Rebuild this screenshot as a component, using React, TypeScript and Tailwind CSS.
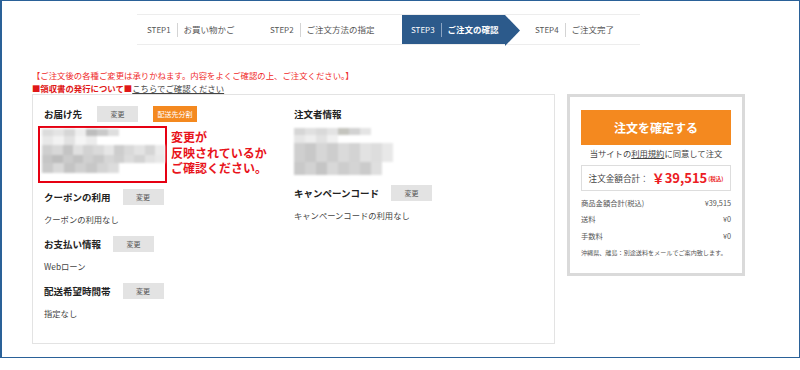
import React from "react";

type BlurRow = { h: number; cells: string[] };

const addressBlur: BlurRow[] = [
  { h: 7, cells: ["#dcdcdc", "#e4e4e4", "#d6d6d6", "#eeeeee", "#bdbdbd", "#c9c9c9", "#dedede"] },
  { h: 9, cells: ["#e8e8e8", "#f2f2f2", "#e2e2e2", "#f5f5f5", "#ececec"] },
  { h: 10, cells: ["#cfcfcf", "#d8d8d8", "#c4c4c4", "#e0e0e0", "#d2d2d2", "#dadada", "#e6e6e6", "#cdcdcd", "#d9d9d9", "#e3e3e3", "#d5d5d5", "#ebebeb"] },
  { h: 8, cells: ["#c6c6c6", "#bdbdbd", "#cbcbcb", "#c2c2c2", "#d0d0d0", "#c8c8c8", "#d6d6d6", "#cfcfcf", "#dcdcdc", "#d3d3d3", "#e2e2e2", "#e8e8e8"] },
  { h: 10, cells: ["#cacaca", "#d9d9d9", "#c4c4c4", "#d0d0d0", "#c7c7c7", "#d4d4d4", "#dcdcdc"] },
];

const ordererBlur: BlurRow[] = [
  { h: 7, cells: ["#d6d6d6", "#e0e0e0", "#d9d9d9", "#e3e3e3", "#c4c4be", "#d2d2d2", "#e4e4e4"] },
  { h: 8, cells: ["#e6e6e6", "#eeeeee", "#e2e2e2", "#f0f0f0"] },
  { h: 19, cells: ["#cfcfcf", "#c8c8c8", "#d6d6d6", "#cdcdcd", "#dadada", "#d3d3d3", "#e2e2e2", "#dddddd", "#e8e8e8"] },
  { h: 13, cells: ["#c9c9c9", "#d2d2d2", "#c5c5c5", "#d8d8d8", "#cdcdcd", "#d4d4d4", "#cbcbcb", "#dfdfdf"] },
];

function Blur({ rows }: { rows: BlurRow[] }) {
  return (
    <div className="flex flex-col blur-[1px]">
      {rows.map((r, i) => (
        <div key={i} className="flex">
          {r.cells.map((c, j) => (
            <div key={j} className="w-[11px]" style={{ backgroundColor: c, height: r.h }} />
          ))}
        </div>
      ))}
    </div>
  );
}

function ChangeBtn() {
  return (
    <div className="ml-3 flex h-[16px] w-[41px] items-center justify-center bg-[#e3e3e3] text-[7px] text-[#555]">
      変更
    </div>
  );
}

function Section({ title, value }: { title: string; value: string }) {
  return (
    <div className="mt-[11px]">
      <div className="flex h-[16px] items-center">
        <h2 className="text-[9.5px] font-bold leading-[12px] text-[#222]">{title}</h2>
        <ChangeBtn />
      </div>
      <p className="mt-[8px] text-[8.3px] leading-[12px] text-[#444]">{value}</p>
    </div>
  );
}

function Step({ num, label, active, className }: { num: string; label: string; active?: boolean; className: string }) {
  return (
    <div className={`relative flex h-full items-center ${className} ${active ? "bg-[#2c5a8b] text-white" : "text-[#555]"}`}>
      <span className="text-[8px] leading-none">{num}</span>
      <span className={`mx-[6px] h-[14px] w-px ${active ? "bg-[#8aa4c2]" : "bg-[#d4d4d4]"}`} />
      <span className={`text-[8.5px] leading-none ${active ? "font-bold" : ""}`}>{label}</span>
      {active && (
        <svg className="absolute right-[-15px] top-0" width="15" height="31" viewBox="0 0 15 31">
          <polygon points="0,0 15,15.5 0,31" fill="#2c5a8b" />
        </svg>
      )}
    </div>
  );
}

export default function App() {
  return (
    <div className="h-[370px] w-[800px] bg-white font-['Noto_Sans_CJK_JP','Liberation_Sans',sans-serif]">
      <div className="h-[358px] w-[800px] border-t border-r border-b border-l-2 border-[#2a6198]">
        {/* steps */}
        <div className="ml-[135px] mt-[13px] flex h-[31px] w-[503px] border-y border-[#ededed]">
          <Step num="STEP1" label="お買い物かご" className="w-[123px] pl-[10px]" />
          <Step num="STEP2" label="ご注文方法の指定" className="w-[142px] pl-[10px]" />
          <Step num="STEP3" label="ご注文の確認" active className="w-[103px] pl-[9px]" />
          <Step num="STEP4" label="ご注文完了" className="pl-[30px]" />
        </div>

        {/* notice */}
        <div className="ml-[30px] mt-[24px] text-[8.4px] leading-[13px]">
          <p className="text-[#f02a2a]">【ご注文後の各種ご変更は承りかねます。内容をよくご確認の上、ご注文ください。】</p>
          <p>
            <span className="font-bold text-[#e01818]">■領収書の発行について■</span>
            <span className="text-[#444] underline">こちらでご確認ください</span>
          </p>
        </div>

        <div className="ml-[30px] mt-[-1px] flex items-start gap-[12px]">
          {/* left panel */}
          <div className="flex h-[250px] w-[523px] border border-[#e3e3e3] pl-[11px] pt-[11px]">
            <div className="w-[249px]">
              <div className="flex h-[16px] items-center">
                <h2 className="text-[9.5px] font-bold leading-[12px] text-[#222]">お届け先</h2>
                <div className="ml-[15px] flex h-[16px] w-[41px] items-center justify-center bg-[#e3e3e3] text-[7px] text-[#555]">
                  変更
                </div>
                <div className="ml-[15px] flex h-[16px] w-[44px] items-center justify-center bg-[#f4891f] text-[7px] text-white">
                  配送先分割
                </div>
              </div>
              <div className="mt-[4px] flex items-start">
                <div className="-ml-[6px] h-[57px] w-[129px] border-2 border-[#e60012] pl-[2px] pt-[1px]">
                  <Blur rows={addressBlur} />
                </div>
                <div className="ml-[4px] mt-[3px] text-[12px] font-bold text-[#e8141c]">
                  <div className="h-[15.5px] leading-[15.5px]">変更が</div>
                  <div className="h-[15.5px] leading-[15.5px]">反映されているか</div>
                  <div className="h-[15.5px] leading-[15.5px]">ご確認ください。</div>
                </div>
              </div>
              <div className="mt-[-5px]">
                <Section title="クーポンの利用" value="クーポンの利用なし" />
                <Section title="お支払い情報" value="Webローン" />
                <Section title="配送希望時間帯" value="指定なし" />
              </div>
            </div>
            <div className="ml-[1px]">
              <div className="flex h-[16px] items-center">
                <h2 className="text-[9.5px] font-bold leading-[12px] text-[#222]">注文者情報</h2>
              </div>
              <div className="mt-[6px]">
                <Blur rows={ordererBlur} />
              </div>
              <div className="mt-[-1px]">
                <Section title="キャンペーンコード" value="キャンペーンコードの利用なし" />
              </div>
            </div>
          </div>

          {/* summary */}
          <div className="h-[182px] w-[178px] border-[3px] border-[#dadada] px-[11px] pt-[13px]">
            <div className="flex h-[35px] items-center justify-center bg-[#f4891f] text-[12px] font-bold text-white">
              注文を確定する
            </div>
            <p className="mt-[2px] text-center text-[8.3px] leading-[12px] text-[#444]">
              当サイトの<span className="underline">利用規約</span>に同意して注文
            </p>
            <div className="mt-[6px] flex h-[26px] items-center justify-center border border-[#dddddd] text-[8.6px] text-[#444]">
              <span>注文金額合計：</span>
              <span className="ml-[3px] text-[13px] font-bold text-[#ec1c24]">￥39,515</span>
              <span className="ml-[1px] mt-[3px] text-[5.5px] font-bold text-[#ec1c24]">(税込)</span>
            </div>
            <div className="mt-[4px] text-[7.3px] text-[#555]">
              <div className="flex h-[16.5px] items-center justify-between">
                <span>商品金額合計(税込)</span>
                <span>¥39,515</span>
              </div>
              <div className="flex h-[16.5px] items-center justify-between">
                <span>送料</span>
                <span>¥0</span>
              </div>
              <div className="flex h-[16.5px] items-center justify-between">
                <span>手数料</span>
                <span>¥0</span>
              </div>
              <p className="flex h-[16px] items-center whitespace-nowrap text-[6.1px]">
                沖縄県、離島：別途送料をメールでご案内致します。
              </p>
            </div>
          </div>
        </div>
      </div>
    </div>
  );
}
